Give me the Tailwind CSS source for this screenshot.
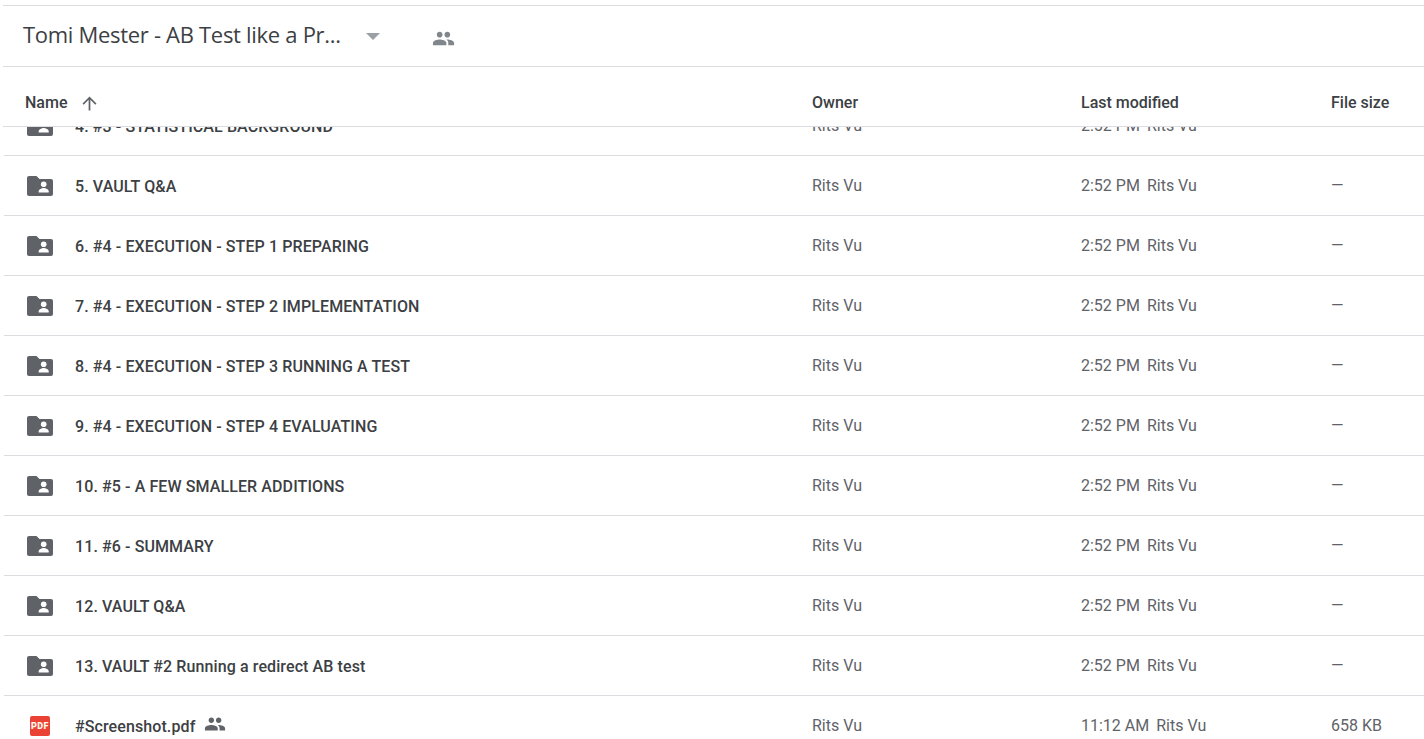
<!DOCTYPE html>
<html lang="en">

<head>
  <meta charset="UTF-8" />
  <title>Tomi Mester - AB Test like a Pro - Google Drive</title>
  <script src="https://cdn.jsdelivr.net/npm/@tailwindcss/browser@4"></script>
</head>

<body class="bg-white h-[739px] overflow-hidden font-['Roboto',sans-serif] text-[#3c4043]">
  <div class="pt-[5px] pl-[3px]">
    <!-- breadcrumb bar -->
    <header class="h-[62px] border-y border-[#dadce0] flex items-center">
      <h1 class="ml-[20px] w-[318px] text-[22px] leading-[28px] text-[#3c4043] font-['Open_Sans',sans-serif] tracking-[-0.3px] whitespace-nowrap mt-[-4px]">Tomi Mester - AB Test like a Pr...</h1>
      <svg class="ml-[25px] w-[14px] h-[7px]" viewBox="0 0 14 7"><path d="M0 0h14L7 7z" fill="#9aa0a6" /></svg>
      <svg class="ml-[52px] w-[23px] h-[23px] mt-[4px]" viewBox="0 0 24 24" fill="#80868b"><path d="M16 11c1.66 0 2.99-1.34 2.99-3S17.66 5 16 5s-3 1.34-3 3 1.34 3 3 3zm-8 0c1.66 0 2.99-1.34 2.99-3S9.66 5 8 5 5 6.34 5 8s1.34 3 3 3zm0 2c-2.33 0-7 1.17-7 3.5V19h14v-2.5C15 14.17 10.33 13 8 13zm8 0c-.29 0-.62.02-.97.05 1.16.84 1.97 1.97 1.97 3.45V19h6v-2.5c0-2.33-4.67-3.5-7-3.5z" /></svg>
    </header>

    <!-- column headings -->
    <div class="h-[60px] flex items-center pt-[13px] border-b border-[#dadce0] text-[16px] font-medium text-[#3c4043]">
      <div class="w-[809px] pl-[22px] flex items-center">
        Name
        <svg class="ml-[12px] w-[21px] h-[21px]" viewBox="0 0 24 24" fill="#5f6368"><path d="M4 12l1.41 1.41L11 7.83V20h2V7.83l5.58 5.59L20 12l-8-8-8 8z" /></svg>
      </div>
      <div class="w-[269px]">Owner</div>
      <div class="w-[250px]">Last modified</div>
      <div>File size</div>
    </div>

    <!-- file list, scrolled part way through row 4 -->
    <div class="h-[612px] overflow-hidden pl-[1px]">
      <div class="mt-[-31px]">
        <div class="h-[60px] flex items-center border-b border-[#dadce0] text-[16px]">
          <div class="w-[808px] flex items-center pl-[23px]">
            <svg class="w-[26px] h-[20px] mt-[1px] mr-[22px]" viewBox="0 0 26 20"><path d="M2 0h7.500l3 3H24a2 2 0 0 1 2 2v13a2 2 0 0 1-2 2H2a2 2 0 0 1-2-2V2a2 2 0 0 1 2-2z" fill="#5f6368" /><circle cx="16.700" cy="8.300" r="2.800" fill="#fff" /><path d="M11.700 16.500v-1.200c0-2 3.300-3.300 5-3.300s5 1.300 5 3.300v1.200z" fill="#fff" /></svg>
            <span class="pt-[2px] font-medium tracking-[0.1px]">4. #3 - STATISTICAL BACKGROUND</span>
          </div>
          <div class="w-[269px] text-[#5f6368]">Rits Vu</div>
          <div class="w-[250px] flex gap-[7px] text-[#5f6368]"><span>2:52 PM</span><span>Rits Vu</span></div>
          <div class="text-[#5f6368]"></div>
        </div>
        <div class="h-[60px] flex items-center border-b border-[#dadce0] text-[16px]">
          <div class="w-[808px] flex items-center pl-[23px]">
            <svg class="w-[26px] h-[20px] mt-[1px] mr-[22px]" viewBox="0 0 26 20"><path d="M2 0h7.500l3 3H24a2 2 0 0 1 2 2v13a2 2 0 0 1-2 2H2a2 2 0 0 1-2-2V2a2 2 0 0 1 2-2z" fill="#5f6368" /><circle cx="16.700" cy="8.300" r="2.800" fill="#fff" /><path d="M11.700 16.500v-1.200c0-2 3.300-3.300 5-3.300s5 1.300 5 3.300v1.200z" fill="#fff" /></svg>
            <span class="pt-[2px] font-medium tracking-[0.1px]">5. VAULT Q&amp;A</span>
          </div>
          <div class="w-[269px] text-[#5f6368]">Rits Vu</div>
          <div class="w-[250px] flex gap-[7px] text-[#5f6368]"><span>2:52 PM</span><span>Rits Vu</span></div>
          <div class="text-[#5f6368]">—</div>
        </div>
        <div class="h-[60px] flex items-center border-b border-[#dadce0] text-[16px]">
          <div class="w-[808px] flex items-center pl-[23px]">
            <svg class="w-[26px] h-[20px] mt-[1px] mr-[22px]" viewBox="0 0 26 20"><path d="M2 0h7.500l3 3H24a2 2 0 0 1 2 2v13a2 2 0 0 1-2 2H2a2 2 0 0 1-2-2V2a2 2 0 0 1 2-2z" fill="#5f6368" /><circle cx="16.700" cy="8.300" r="2.800" fill="#fff" /><path d="M11.700 16.500v-1.200c0-2 3.300-3.300 5-3.300s5 1.300 5 3.300v1.200z" fill="#fff" /></svg>
            <span class="pt-[2px] font-medium tracking-[0.1px]">6. #4 - EXECUTION - STEP 1 PREPARING</span>
          </div>
          <div class="w-[269px] text-[#5f6368]">Rits Vu</div>
          <div class="w-[250px] flex gap-[7px] text-[#5f6368]"><span>2:52 PM</span><span>Rits Vu</span></div>
          <div class="text-[#5f6368]">—</div>
        </div>
        <div class="h-[60px] flex items-center border-b border-[#dadce0] text-[16px]">
          <div class="w-[808px] flex items-center pl-[23px]">
            <svg class="w-[26px] h-[20px] mt-[1px] mr-[22px]" viewBox="0 0 26 20"><path d="M2 0h7.500l3 3H24a2 2 0 0 1 2 2v13a2 2 0 0 1-2 2H2a2 2 0 0 1-2-2V2a2 2 0 0 1 2-2z" fill="#5f6368" /><circle cx="16.700" cy="8.300" r="2.800" fill="#fff" /><path d="M11.700 16.500v-1.200c0-2 3.300-3.300 5-3.300s5 1.300 5 3.300v1.200z" fill="#fff" /></svg>
            <span class="pt-[2px] font-medium tracking-[0.1px]">7. #4 - EXECUTION - STEP 2 IMPLEMENTATION</span>
          </div>
          <div class="w-[269px] text-[#5f6368]">Rits Vu</div>
          <div class="w-[250px] flex gap-[7px] text-[#5f6368]"><span>2:52 PM</span><span>Rits Vu</span></div>
          <div class="text-[#5f6368]">—</div>
        </div>
        <div class="h-[60px] flex items-center border-b border-[#dadce0] text-[16px]">
          <div class="w-[808px] flex items-center pl-[23px]">
            <svg class="w-[26px] h-[20px] mt-[1px] mr-[22px]" viewBox="0 0 26 20"><path d="M2 0h7.500l3 3H24a2 2 0 0 1 2 2v13a2 2 0 0 1-2 2H2a2 2 0 0 1-2-2V2a2 2 0 0 1 2-2z" fill="#5f6368" /><circle cx="16.700" cy="8.300" r="2.800" fill="#fff" /><path d="M11.700 16.500v-1.200c0-2 3.300-3.300 5-3.300s5 1.300 5 3.300v1.200z" fill="#fff" /></svg>
            <span class="pt-[2px] font-medium tracking-[0.1px]">8. #4 - EXECUTION - STEP 3 RUNNING A TEST</span>
          </div>
          <div class="w-[269px] text-[#5f6368]">Rits Vu</div>
          <div class="w-[250px] flex gap-[7px] text-[#5f6368]"><span>2:52 PM</span><span>Rits Vu</span></div>
          <div class="text-[#5f6368]">—</div>
        </div>
        <div class="h-[60px] flex items-center border-b border-[#dadce0] text-[16px]">
          <div class="w-[808px] flex items-center pl-[23px]">
            <svg class="w-[26px] h-[20px] mt-[1px] mr-[22px]" viewBox="0 0 26 20"><path d="M2 0h7.500l3 3H24a2 2 0 0 1 2 2v13a2 2 0 0 1-2 2H2a2 2 0 0 1-2-2V2a2 2 0 0 1 2-2z" fill="#5f6368" /><circle cx="16.700" cy="8.300" r="2.800" fill="#fff" /><path d="M11.700 16.500v-1.200c0-2 3.300-3.300 5-3.300s5 1.300 5 3.300v1.200z" fill="#fff" /></svg>
            <span class="pt-[2px] font-medium tracking-[0.1px]">9. #4 - EXECUTION - STEP 4 EVALUATING</span>
          </div>
          <div class="w-[269px] text-[#5f6368]">Rits Vu</div>
          <div class="w-[250px] flex gap-[7px] text-[#5f6368]"><span>2:52 PM</span><span>Rits Vu</span></div>
          <div class="text-[#5f6368]">—</div>
        </div>
        <div class="h-[60px] flex items-center border-b border-[#dadce0] text-[16px]">
          <div class="w-[808px] flex items-center pl-[23px]">
            <svg class="w-[26px] h-[20px] mt-[1px] mr-[22px]" viewBox="0 0 26 20"><path d="M2 0h7.500l3 3H24a2 2 0 0 1 2 2v13a2 2 0 0 1-2 2H2a2 2 0 0 1-2-2V2a2 2 0 0 1 2-2z" fill="#5f6368" /><circle cx="16.700" cy="8.300" r="2.800" fill="#fff" /><path d="M11.700 16.500v-1.200c0-2 3.300-3.300 5-3.300s5 1.300 5 3.300v1.200z" fill="#fff" /></svg>
            <span class="pt-[2px] font-medium tracking-[0.1px]">10. #5 - A FEW SMALLER ADDITIONS</span>
          </div>
          <div class="w-[269px] text-[#5f6368]">Rits Vu</div>
          <div class="w-[250px] flex gap-[7px] text-[#5f6368]"><span>2:52 PM</span><span>Rits Vu</span></div>
          <div class="text-[#5f6368]">—</div>
        </div>
        <div class="h-[60px] flex items-center border-b border-[#dadce0] text-[16px]">
          <div class="w-[808px] flex items-center pl-[23px]">
            <svg class="w-[26px] h-[20px] mt-[1px] mr-[22px]" viewBox="0 0 26 20"><path d="M2 0h7.500l3 3H24a2 2 0 0 1 2 2v13a2 2 0 0 1-2 2H2a2 2 0 0 1-2-2V2a2 2 0 0 1 2-2z" fill="#5f6368" /><circle cx="16.700" cy="8.300" r="2.800" fill="#fff" /><path d="M11.700 16.500v-1.200c0-2 3.300-3.300 5-3.300s5 1.300 5 3.300v1.200z" fill="#fff" /></svg>
            <span class="pt-[2px] font-medium tracking-[0.1px]">11. #6 - SUMMARY</span>
          </div>
          <div class="w-[269px] text-[#5f6368]">Rits Vu</div>
          <div class="w-[250px] flex gap-[7px] text-[#5f6368]"><span>2:52 PM</span><span>Rits Vu</span></div>
          <div class="text-[#5f6368]">—</div>
        </div>
        <div class="h-[60px] flex items-center border-b border-[#dadce0] text-[16px]">
          <div class="w-[808px] flex items-center pl-[23px]">
            <svg class="w-[26px] h-[20px] mt-[1px] mr-[22px]" viewBox="0 0 26 20"><path d="M2 0h7.500l3 3H24a2 2 0 0 1 2 2v13a2 2 0 0 1-2 2H2a2 2 0 0 1-2-2V2a2 2 0 0 1 2-2z" fill="#5f6368" /><circle cx="16.700" cy="8.300" r="2.800" fill="#fff" /><path d="M11.700 16.500v-1.200c0-2 3.300-3.300 5-3.300s5 1.300 5 3.300v1.200z" fill="#fff" /></svg>
            <span class="pt-[2px] font-medium tracking-[0.1px]">12. VAULT Q&amp;A</span>
          </div>
          <div class="w-[269px] text-[#5f6368]">Rits Vu</div>
          <div class="w-[250px] flex gap-[7px] text-[#5f6368]"><span>2:52 PM</span><span>Rits Vu</span></div>
          <div class="text-[#5f6368]">—</div>
        </div>
        <div class="h-[60px] flex items-center border-b border-[#dadce0] text-[16px]">
          <div class="w-[808px] flex items-center pl-[23px]">
            <svg class="w-[26px] h-[20px] mt-[1px] mr-[22px]" viewBox="0 0 26 20"><path d="M2 0h7.500l3 3H24a2 2 0 0 1 2 2v13a2 2 0 0 1-2 2H2a2 2 0 0 1-2-2V2a2 2 0 0 1 2-2z" fill="#5f6368" /><circle cx="16.700" cy="8.300" r="2.800" fill="#fff" /><path d="M11.700 16.500v-1.200c0-2 3.300-3.300 5-3.300s5 1.300 5 3.300v1.200z" fill="#fff" /></svg>
            <span class="pt-[2px] font-medium tracking-[0.1px]">13. VAULT #2 Running a redirect AB test</span>
          </div>
          <div class="w-[269px] text-[#5f6368]">Rits Vu</div>
          <div class="w-[250px] flex gap-[7px] text-[#5f6368]"><span>2:52 PM</span><span>Rits Vu</span></div>
          <div class="text-[#5f6368]">—</div>
        </div>
        <div class="h-[60px] flex items-center border-b border-[#dadce0] text-[16px]">
          <div class="w-[808px] flex items-center pl-[26px]">
            <div class="w-[20px] h-[20px] mt-[1px] mr-[25px] rounded-[2px] bg-[#ea4335] text-[#fff7ec] text-[9px] leading-[20px] font-black tracking-[0.4px] text-center">PDF</div>
            <span class="pt-[2px] font-medium tracking-[0.1px]">#Screenshot.pdf</span>
            <svg class="ml-[9px] w-[22px] h-[22px] mt-[-4px]" viewBox="0 0 24 24" fill="#5f6368"><path d="M16 11c1.66 0 2.99-1.34 2.99-3S17.66 5 16 5s-3 1.34-3 3 1.34 3 3 3zm-8 0c1.66 0 2.99-1.34 2.99-3S9.66 5 8 5 5 6.34 5 8s1.34 3 3 3zm0 2c-2.33 0-7 1.17-7 3.5V19h14v-2.5C15 14.17 10.33 13 8 13zm8 0c-.29 0-.62.02-.97.05 1.16.84 1.97 1.97 1.97 3.45V19h6v-2.5c0-2.33-4.67-3.5-7-3.5z" /></svg>
          </div>
          <div class="w-[269px] text-[#5f6368]">Rits Vu</div>
          <div class="w-[250px] flex gap-[7px] text-[#5f6368]"><span>11:12 AM</span><span>Rits Vu</span></div>
          <div class="text-[#5f6368]">658 KB</div>
        </div>
      </div>
    </div>
  </div>
</body>

</html>
